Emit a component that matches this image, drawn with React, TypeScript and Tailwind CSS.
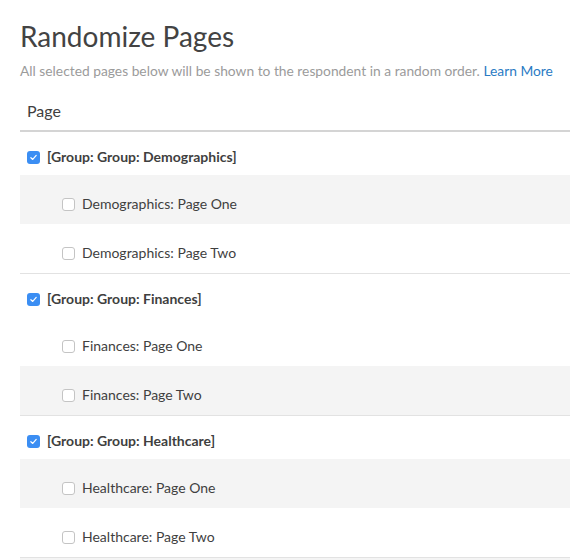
import { Fragment } from 'react';

const groups = [
  { name: 'Demographics', shadeFirst: true },
  { name: 'Finances', shadeFirst: false },
  { name: 'Healthcare', shadeFirst: true },
];

function Box({ checked }: { checked?: boolean }) {
  if (checked) {
    return (
      <span className="flex h-[13px] w-[13px] shrink-0 items-center justify-center rounded-[3px] bg-[#3b8ef3]">
        <svg viewBox="0 0 12 12" className="h-[9px] w-[9px]" fill="none">
          <path d="M2.5 6.3 L5 8.6 L9.6 3.2" stroke="white" strokeWidth="1.6" strokeLinecap="round" strokeLinejoin="round" />
        </svg>
      </span>
    );
  }
  return <span className="block h-[13px] w-[13px] shrink-0 rounded-[3px] border border-[#c4c4c4] bg-white" />;
}

export default function App() {
  return (
    <div className="h-[560px] overflow-hidden bg-white pl-[20px] font-['Lato','Open_Sans',sans-serif] text-[#3f3f3f]">
      {/* Header */}
      <h1 className="pt-[18px] text-[28px] leading-[36px] font-normal text-[#434343]">Randomize Pages</h1>
      <p className="mt-[7px] text-[13.8px] leading-[20px] whitespace-nowrap text-[#9b9b9b]">
        All selected pages below will be shown to the respondent in a random order.{' '}
        <a href="#" className="text-[#2a7bc4]">Learn More</a>
      </p>

      {/* Table */}
      <div className="mt-[18px] border-b-2 border-[#d4d4d4] pb-[7px] pl-[7px] text-[16px] leading-[24px]">Page</div>
      {groups.map((g, gi) => (
        <Fragment key={g.name}>
          <div className={`flex items-center gap-[7px] pl-[7px] pt-[15px] pb-[8px] ${gi > 0 ? 'border-t border-[#e2e2e2]' : ''}`}>
            <Box checked />
            <span className="text-[14px] leading-[20px] font-bold">[Group: Group: {g.name}]</span>
          </div>
          {['One', 'Two'].map((p, pi) => {
            const shaded = g.shadeFirst ? pi === 0 : pi === 1;
            return (
              <div
                key={p}
                className={`flex items-center gap-[7px] pl-[42px] pt-[19px] pb-[10px] ${shaded ? 'bg-[#f4f4f4]' : ''}`}
              >
                <Box />
                <span className="text-[14px] leading-[20px]">
                  {g.name}: Page {p}
                </span>
              </div>
            );
          })}
        </Fragment>
      ))}
      <div className="h-[40px] border-t border-[#e2e2e2] bg-[#f4f4f4]" />
    </div>
  );
}
